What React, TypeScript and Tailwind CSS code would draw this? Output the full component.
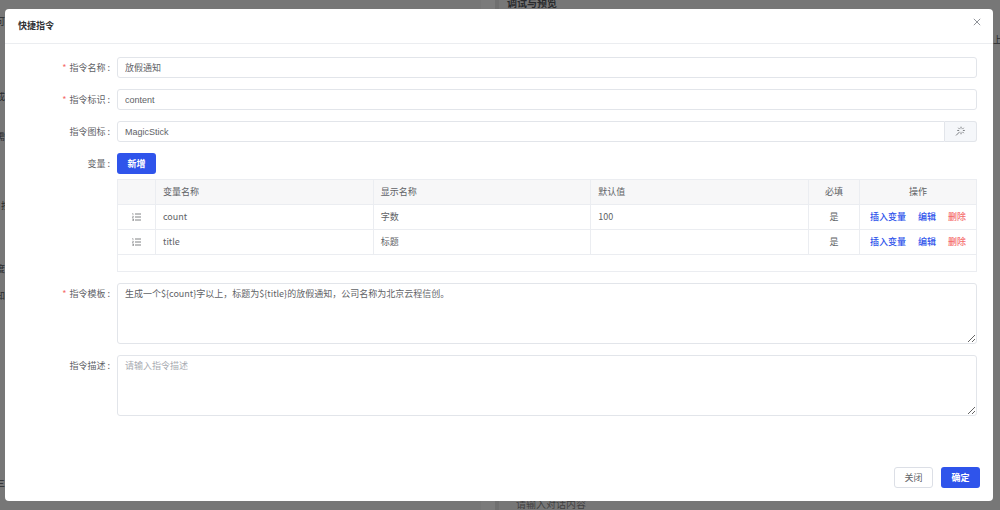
import React from "react";

type Variable = { name: string; label: string; value: string };

const variables: Variable[] = [
  { name: "count", label: "字数", value: "100" },
  { name: "title", label: "标题", value: "" },
];

const field =
  "block w-full rounded-[3px] border border-[#e2e5ea] bg-white px-[7px] font-['Liberation_Sans','Noto_Sans_CJK_SC',sans-serif] text-[9px] text-[#606266] outline-none placeholder:text-[#a8abb2]";
const area =
  "block h-[61px] w-full resize-y rounded-[3px] border border-[#e2e5ea] bg-white px-[7px] py-[3px] text-[9px] leading-[14px] text-[#606266] outline-none placeholder:text-[#a8abb2]";
const cell = "border-r border-b border-[#ebedf1] px-[7px] last:border-r-0";

function Row({
  id,
  label,
  required,
  children,
}: {
  id: string;
  label: string;
  required?: boolean;
  children: React.ReactNode;
}) {
  return (
    <div className="flex items-start">
      <label htmlFor={id} className="w-[99px] shrink-0 pr-[7px] text-right leading-[21px]">
        {required && <span className="mr-[3px] text-[#f56c6c]">*</span>}
        {label} :
      </label>
      <div className="min-w-0 flex-1">{children}</div>
    </div>
  );
}

function ListIcon() {
  return (
    <svg viewBox="0 0 18 16" className="mx-auto block h-2 w-[9px]" fill="none" stroke="#606266">
      <path strokeWidth="1.6" d="M6 2h12M6 8h12M6 14h12" />
      <path strokeWidth="1" d="M.8 1h1.200v3M.5 6.500h2.500L.8 9.500h2.500M.5 12h2.500v3.500H.5M1 13.700h2" />
    </svg>
  );
}

function MagicStick() {
  return (
    <svg viewBox="0 0 1024 1024" className="h-[11px] w-[11px]" fill="none" stroke="#606266" strokeWidth="76">
      <path d="M560 64v176M560 592v176M208 416h176M736 416h176M311 167l125 125M684 540l125 125M809 167L684 292M436 540L96 880" />
    </svg>
  );
}

export default function App() {
  return (
    <div className="relative h-screen overflow-hidden bg-[#777777] font-['Noto_Sans_CJK_SC','Noto_Sans',sans-serif] text-[9px] text-[#606266]">
      <div aria-hidden="true" className="absolute inset-0 text-[#292a2c]">
        <div className="absolute inset-y-0 left-[481px] w-[18px] border-r-4 border-[#6f6f6f] bg-[#7b7b7b]" />
        <span className="absolute top-[-4px] left-[507px] text-[10px] leading-[14px] font-bold">调试与预览</span>
        <span className="absolute top-[497px] left-[516px] text-[10px] leading-[14px] text-[#414141]">请输入对话内容</span>
        <span className="absolute top-[15px] right-full mr-[-5px] whitespace-nowrap">可</span>
        <span className="absolute top-[90px] right-full mr-[-5px] whitespace-nowrap">成</span>
        <span className="absolute top-[130px] right-full mr-[-5px] whitespace-nowrap">需</span>
        <span className="absolute top-[199px] left-px">按</span>
        <span className="absolute top-[262px] right-full mr-[-5px] whitespace-nowrap">度</span>
        <span className="absolute top-[289px] right-full mr-[-5px] whitespace-nowrap">知</span>
        <span className="absolute top-[477px] right-full mr-[-5px] whitespace-nowrap">三</span>
        <span className="absolute top-[33px] left-[993px]">上</span>
      </div>

      <div
        role="dialog"
        aria-labelledby="dialog-title"
        className="absolute top-[9px] right-[7px] bottom-[9px] left-[5px] flex flex-col rounded-[4px] bg-white"
      >
        <header className="flex h-[35px] shrink-0 items-center justify-between border-b border-[#ebedf0] pr-3 pl-[13px]">
          <h1 id="dialog-title" className="text-[9px] font-bold text-[#303133]">
            快捷指令
          </h1>
          <button type="button" aria-label="关闭对话框" className="mb-2">
            <svg viewBox="0 0 8 8" className="block h-2 w-2" stroke="#909399" strokeWidth="1">
              <path d="M.8.8l6.400 6.400M7.200.8L.8 7.200" />
            </svg>
          </button>
        </header>

        <main className="flex flex-1 flex-col pt-[13px] pr-4 pl-[13px]">
          <div className="flex flex-col gap-[11px]">
            <Row id="name" label="指令名称" required>
              <input id="name" defaultValue="放假通知" className={`${field} h-[21px]`} />
            </Row>
            <Row id="key" label="指令标识" required>
              <input id="key" defaultValue="content" className={`${field} h-[21px]`} />
            </Row>
            <Row id="icon" label="指令图标">
              <div className="flex">
                <input id="icon" defaultValue="MagicStick" className={`${field} h-[21px] rounded-r-none`} />
                <button
                  type="button"
                  aria-label="选择图标"
                  className="flex h-[21px] w-8 shrink-0 items-center justify-center rounded-r-[3px] border border-l-0 border-[#e2e5ea] bg-[#f5f7fa]"
                >
                  <MagicStick />
                </button>
              </div>
            </Row>
            <Row id="add" label="变量">
              <button id="add" type="button" className="block h-[21px] w-[39px] rounded-[3px] bg-[#2f54eb] font-bold text-white">
                新增
              </button>
              <div className="mt-[5px] h-[93px] border border-[#ebedf1]">
                <table className="w-full table-fixed border-separate border-spacing-0 text-left">
                  <colgroup>
                    <col className="w-[38px]" />
                    <col />
                    <col />
                    <col />
                    <col className="w-[51px]" />
                    <col className="w-[116px]" />
                  </colgroup>
                  <thead>
                    <tr className="h-[25px] bg-[#f7f7f8]">
                      <th className={cell} />
                      <th className={`${cell} font-normal`}>变量名称</th>
                      <th className={`${cell} font-normal`}>显示名称</th>
                      <th className={`${cell} font-normal`}>默认值</th>
                      <th className={`${cell} text-center font-normal`}>必填</th>
                      <th className={`${cell} text-center font-normal`}>操作</th>
                    </tr>
                  </thead>
                  <tbody>
                    {variables.map((v) => (
                      <tr key={v.name} className="h-[25px]">
                        <td className={cell}>
                          <ListIcon />
                        </td>
                        <td className={cell}>{v.name}</td>
                        <td className={cell}>{v.label}</td>
                        <td className={cell}>{v.value}</td>
                        <td className={`${cell} text-center`}>是</td>
                        <td className={cell}>
                          <div className="flex justify-center gap-3 font-medium whitespace-nowrap">
                            <button type="button" className="text-[#2f54eb]">插入变量</button>
                            <button type="button" className="text-[#2f54eb]">编辑</button>
                            <button type="button" className="text-[#f56c6c]">删除</button>
                          </div>
                        </td>
                      </tr>
                    ))}
                  </tbody>
                </table>
              </div>
            </Row>
            <Row id="template" label="指令模板" required>
              <textarea
                id="template"
                defaultValue="生成一个${count}字以上，标题为${title}的放假通知，公司名称为北京云程信创。"
                className={area}
              />
            </Row>
            <Row id="description" label="指令描述">
              <textarea id="description" placeholder="请输入指令描述" className={area} />
            </Row>
          </div>
        </main>

        <footer className="flex shrink-0 justify-end gap-2 pr-[13px] pb-[13px]">
          <button type="button" className="h-[21px] w-[39px] rounded-[3px] border border-[#dcdfe6] bg-white">
            关闭
          </button>
          <button type="button" className="h-[21px] w-[39px] rounded-[3px] bg-[#2f54eb] font-bold text-white">
            确定
          </button>
        </footer>
      </div>
    </div>
  );
}
